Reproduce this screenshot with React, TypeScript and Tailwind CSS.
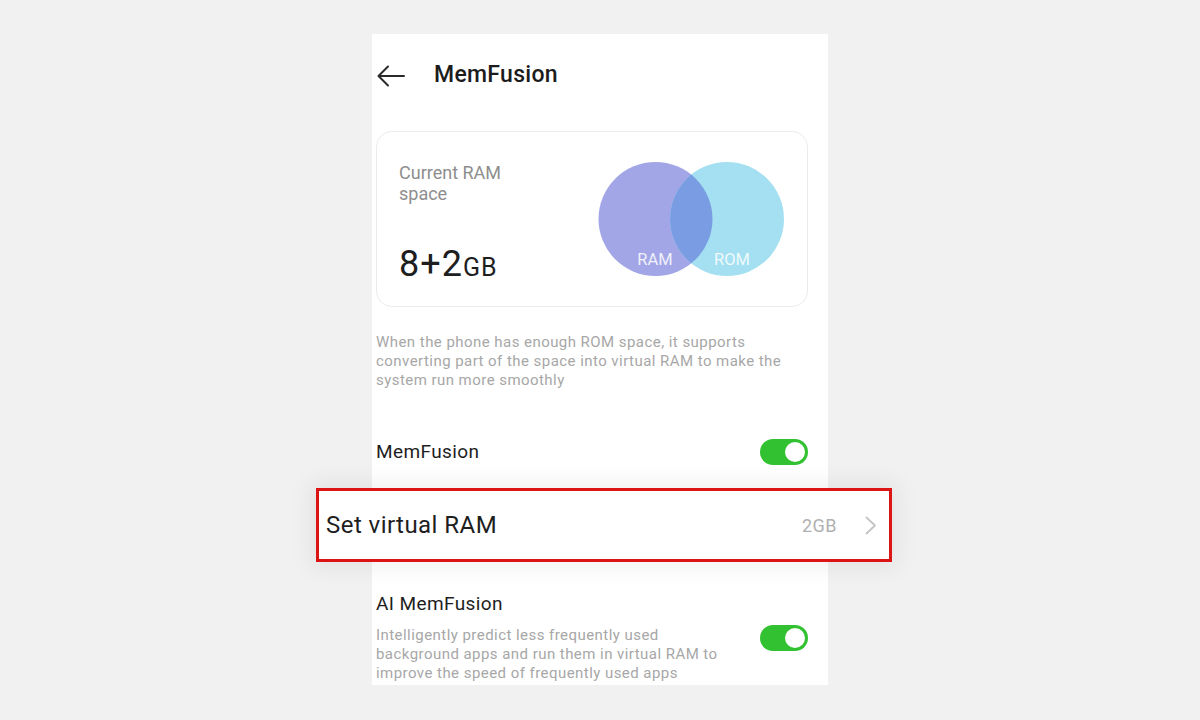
import React from "react";

function Toggle() {
  return (
    <div className="relative w-[48px] h-[26px] rounded-full bg-[#31c131] shrink-0">
      <div className="absolute right-[3px] top-[3px] w-[20px] h-[20px] rounded-full bg-white" />
    </div>
  );
}

function Venn() {
  return (
    <svg width="188" height="116" viewBox="0 0 188 116" className="shrink-0">
      <defs>
        <clipPath id="romClip">
          <circle cx="129" cy="58" r="57" />
        </clipPath>
      </defs>
      <circle cx="57.5" cy="58" r="57" fill="#a3a6e6" />
      <circle cx="129" cy="58" r="57" fill="#a4e0f1" />
      <circle cx="57.5" cy="58" r="57" fill="#7a9ce2" clipPath="url(#romClip)" />
      <text x="57" y="104" textAnchor="middle" fontSize="16.5" fill="#ffffff" fillOpacity="0.85" fontFamily="Roboto, sans-serif">
        RAM
      </text>
      <text x="134" y="104" textAnchor="middle" fontSize="16.5" fill="#ffffff" fillOpacity="0.85" fontFamily="Roboto, sans-serif">
        ROM
      </text>
    </svg>
  );
}

export default function App() {
  return (
    <div className="w-full h-[720px] bg-[#f1f1f1] flex justify-center overflow-hidden font-['Roboto',sans-serif]">
      <div className="w-[456px] h-[651px] mt-[34px] bg-white pl-[4px] pr-[20px] flex flex-col">
        {/* header */}
        <div className="h-[80px] pt-[3px] flex items-center shrink-0">
          <svg width="28" height="22" viewBox="0 0 28 22" className="ml-[1px]">
            <path d="M27 11H2M11 1.5L1.5 11l9.5 9.5" fill="none" stroke="#2a2a2a" strokeWidth="2" strokeLinecap="round" strokeLinejoin="round" />
          </svg>
          <h1 className="ml-[29px] text-[23px] tracking-[0.3px] font-medium text-[#1c1c1c]">MemFusion</h1>
        </div>

        {/* RAM card */}
        <div className="mt-[17px] h-[176px] shrink-0 rounded-[16px] border border-[#ebebeb] flex justify-between items-center pl-[22px] pr-[21px]">
          <div className="self-start pt-[30px]">
            <p className="text-[18px] leading-[21px] text-[#8e8e8e] w-[120px]">Current RAM space</p>
            <p className="mt-[42px] leading-none text-[#1e1e1e]">
              <span className="text-[36px] tracking-[1px]">8+2</span>
              <span className="text-[25px] tracking-[1px]">GB</span>
            </p>
          </div>
          <Venn />
        </div>

        <p className="mt-[26px] text-[15px] tracking-[0.45px] leading-[19px] text-[#a7a7a7]">
          When the phone has enough ROM space, it supports converting part of the space into virtual RAM to make the system run more smoothly
        </p>

        {/* MemFusion toggle row */}
        <div className="mt-[49px] h-[26px] flex items-center justify-between shrink-0">
          <span className="text-[19px] tracking-[0.4px] text-[#1e1e1e]">MemFusion</span>
          <Toggle />
        </div>

        {/* Set virtual RAM row, shown enlarged */}
        <div className="relative h-[128px] shrink-0">
          <div className="absolute left-[-60px] right-[-84px] top-[23px] h-[74px] bg-white border-[3px] border-[#dc1414] shadow-[0_0_22px_6px_rgba(0,0,0,0.06)] flex items-center pl-[7px] pr-[12px]">
            <span className="text-[24px] tracking-[0.45px] text-[#1e1e1e]">Set virtual RAM</span>
            <span className="ml-auto text-[18px] tracking-[0.5px] text-[#b0b0b0]">2GB</span>
            <svg width="12" height="19" viewBox="0 0 12 19" className="ml-[28px]">
              <path d="M1.5 1.5l8.5 8-8.5 8" fill="none" stroke="#c4c4c4" strokeWidth="1.8" strokeLinecap="round" strokeLinejoin="round" />
            </svg>
          </div>
        </div>

        {/* AI MemFusion */}
        <div className="flex items-center justify-between">
          <div>
            <p className="text-[19px] tracking-[0.4px] leading-[22px] text-[#1e1e1e]">AI MemFusion</p>
            <p className="mt-[11px] max-w-[360px] text-[15px] tracking-[0.45px] leading-[19px] text-[#a7a7a7]">
              Intelligently predict less frequently used background apps and run them in virtual RAM to improve the speed of frequently used apps
            </p>
          </div>
          <Toggle />
        </div>
      </div>
    </div>
  );
}
